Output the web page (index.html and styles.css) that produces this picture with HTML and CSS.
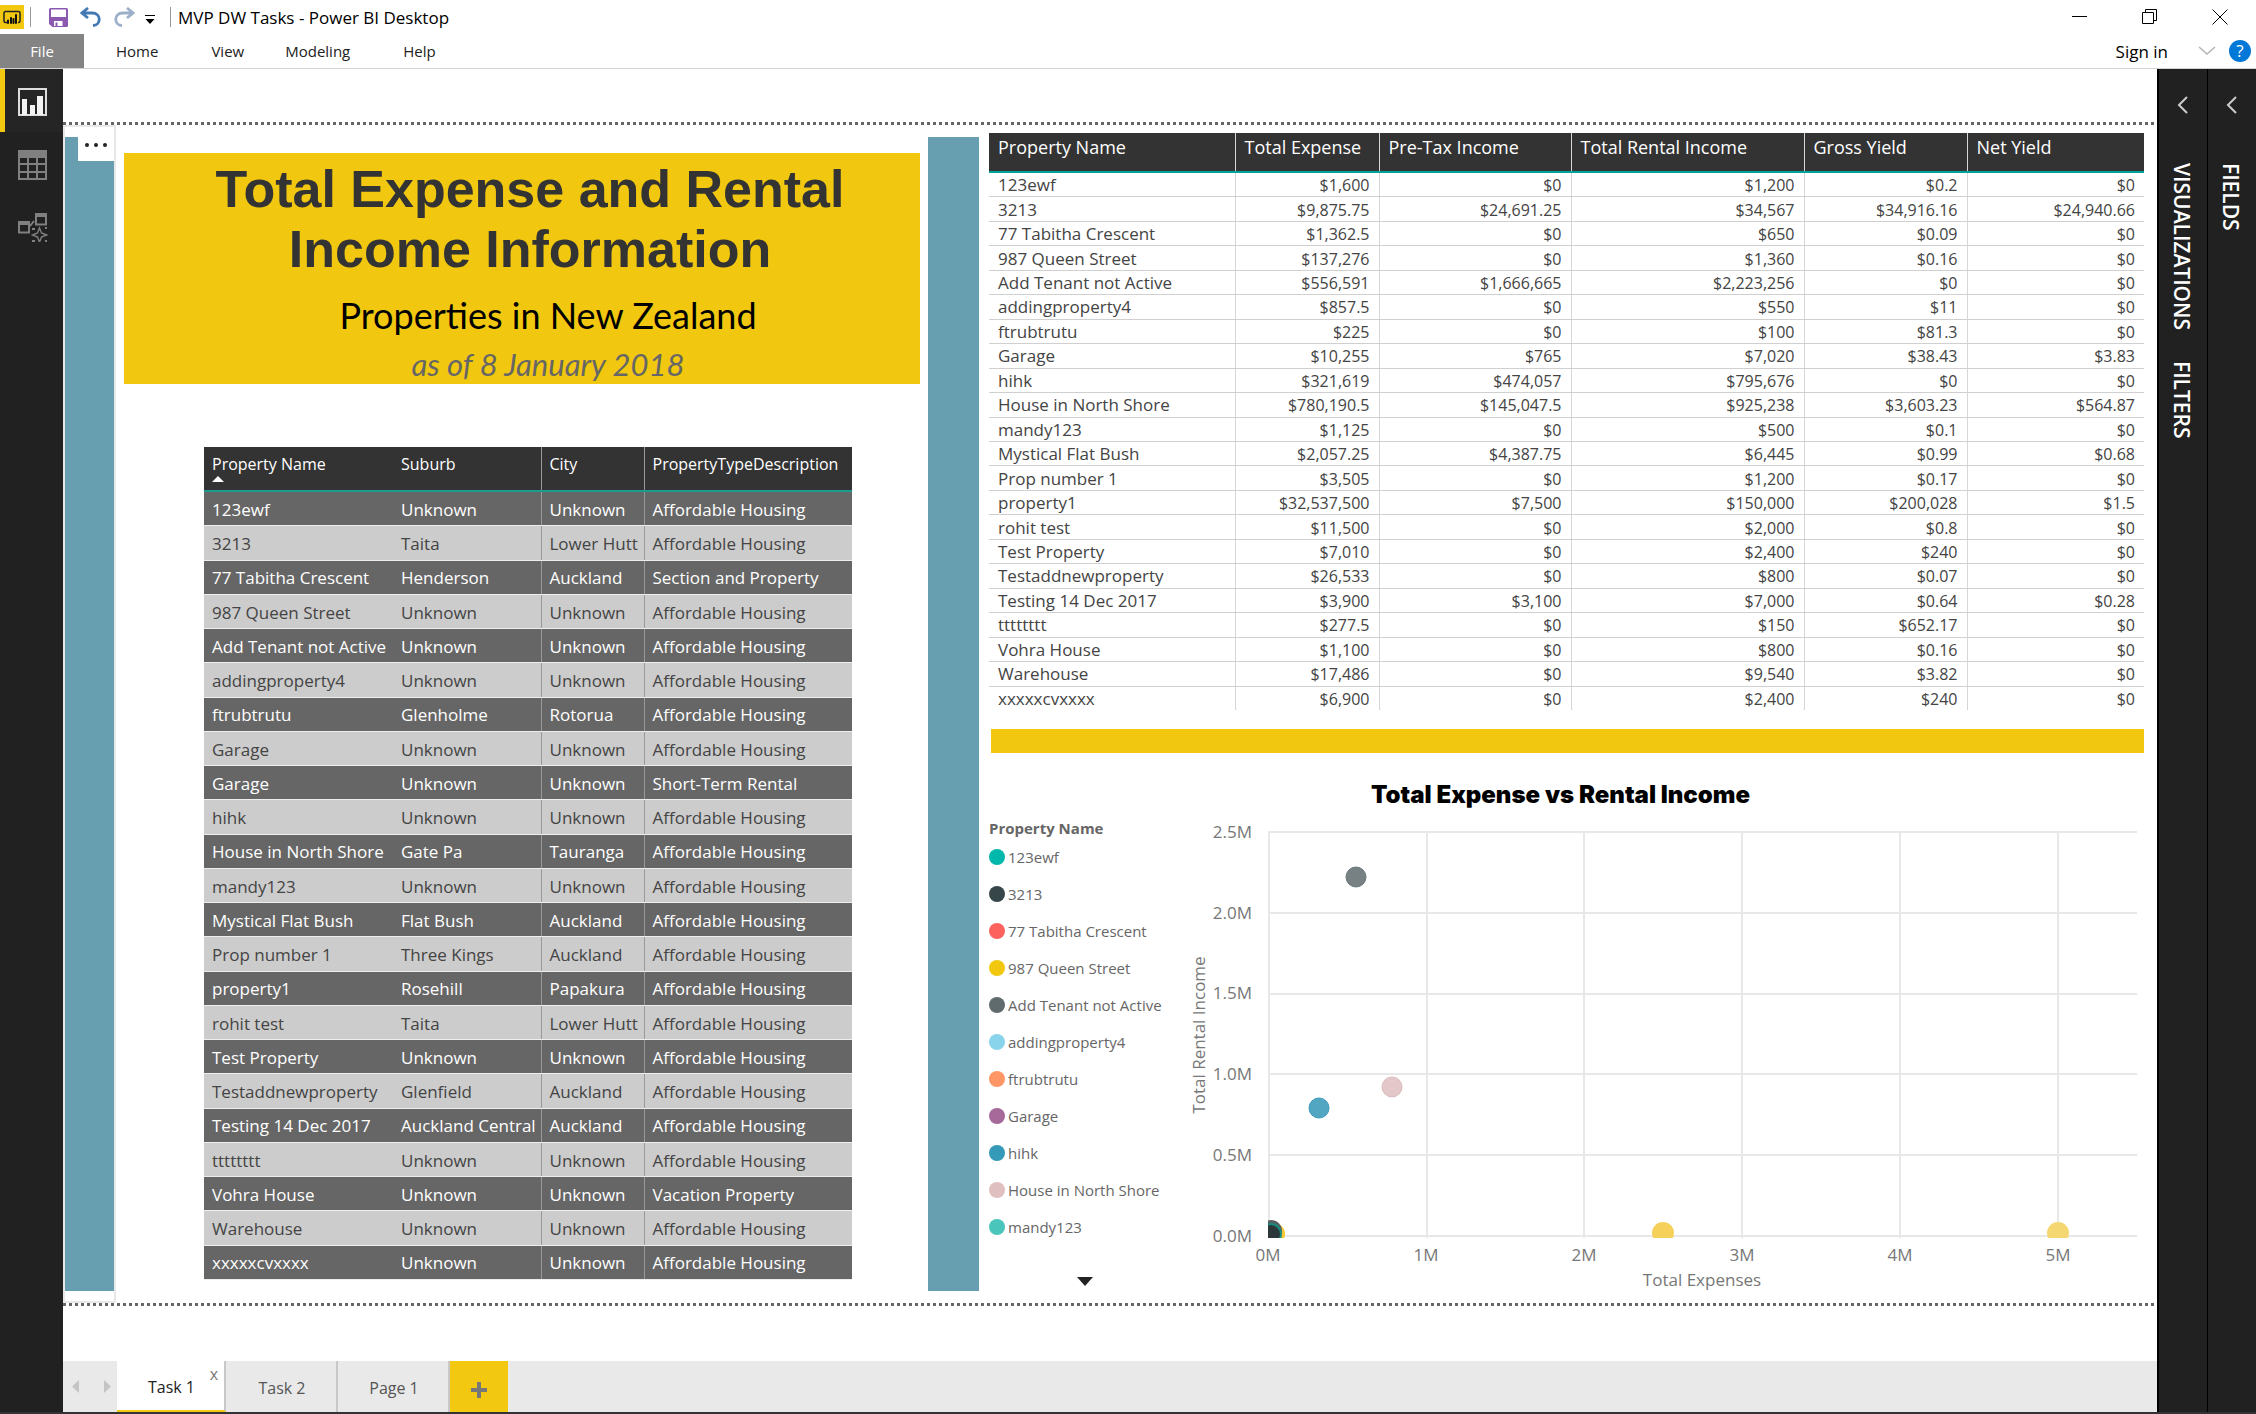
FILE: index.html
```html
<!DOCTYPE html>
<html lang="en">
<head>
<meta charset="utf-8">
<title>MVP DW Tasks - Power BI Desktop</title>
<link rel="stylesheet" href="styles.css">
</head>
<body>
<header class="titlebar">
  <div class="logo"><svg width="24" height="24" viewBox="0 0 24 24"><path d="M7 17.500H5.500a1.500 1.500 0 0 1-1.500-1.500V8a1.500 1.500 0 0 1 1.500-1.500h13A1.500 1.500 0 0 1 20 8v8a1.500 1.500 0 0 1-1.500 1.500H18" fill="none" stroke="#222" stroke-width="1.500"/><path d="M8 18v-2.500M11 18v-5M13.500 18v-4M16 18V10" stroke="#111" stroke-width="2" stroke-linecap="round"/></svg></div>
  <span class="sep"></span>
  <button class="tool save" aria-label="Save"><svg width="19" height="19" viewBox="0 0 19 19"><path d="M0 1.500Q0 0 1.500 0h16Q19 0 19 1.500v16q0 1.500-1.500 1.500h-14L0 16z" fill="#8b59b0"/><path d="M2 1.500h15V9H2z" fill="#fff"/><path d="M5 13h8.500v5H5z" fill="#fff"/><path d="M6.500 14.500h2V18h-2z" fill="#8b59b0"/></svg></button>
  <button class="tool undo" aria-label="Undo"><svg width="22" height="20" viewBox="0 0 22 20"><path d="M8 1L2 6l6 5M3 6h9c10 0 9 12.500 1 12.500" fill="none" stroke="#447ab4" stroke-width="2.800"/></svg></button>
  <button class="tool redo" aria-label="Redo"><svg width="22" height="20" viewBox="0 0 22 20"><path d="M14 1l6 5-6 5M19 6h-9C0 6 1 18.500 9 18.500" fill="none" stroke="#9db0ca" stroke-width="2.800"/></svg></button>
  <button class="tool customize" aria-label="Customize"><svg width="10" height="10" viewBox="0 0 10 10"><path d="M0 .500h10" stroke="#000"/><path d="M.500 4h9L5 9z"/></svg></button>
  <span class="sep last"></span>
  <h1 class="app-title">MVP DW Tasks - Power BI Desktop</h1>
  <div class="window-controls">
    <button aria-label="Minimize"><svg width="16" height="16" viewBox="0 0 16 16"><path d="M0 7.500h15" stroke="#000"/></svg></button>
    <button aria-label="Restore"><svg width="16" height="16" viewBox="0 0 16 16"><path d="M.5 3.500h11v11H.5zM3.500 3V.5h11v11H12" fill="none" stroke="#000"/></svg></button>
    <button aria-label="Close"><svg width="16" height="16" viewBox="0 0 16 16"><path d="M.5.5l15 15M15.500.5l-15 15" stroke="#000"/></svg></button>
  </div>
</header>
<nav class="ribbon">
  <button class="file">File</button>
  <button class="item home">Home</button>
  <button class="item view">View</button>
  <button class="item modeling">Modeling</button>
  <button class="item">Help</button>
  <div class="account">
    <button class="signin">Sign in</button>
    <button aria-label="Expand ribbon"><svg width="18" height="10" viewBox="0 0 18 10"><path d="M1 1l8 7 8-7" fill="none" stroke="#b4b4b4" stroke-width="1.500"/></svg></button>
    <button class="help" aria-label="Help center">?</button>
  </div>
</nav>
<main class="main">
  <nav class="rail">
    <button class="active" aria-label="Report"><svg width="29" height="28" viewBox="0 0 29 28"><path d="M1 1h27v26H1z" fill="none" stroke="#ddd" stroke-width="2"/><path d="M4 11h5v16H4zM12 17h5v10h-5zM19 8h6v19h-6z" fill="#f2f2f2"/></svg></button>
    <button aria-label="Data"><svg width="29" height="30" viewBox="0 0 29 30"><path d="M0 0h29v30H0z" fill="#808080"/><path d="M2 8h7v5H2zM11 8h7v5h-7zM20 8h7v5h-7zM2 15h7v6H2zM11 15h7v6h-7zM20 15h7v6h-7zM2 23h7v5H2zM11 23h7v5h-7zM20 23h7v5h-7z" fill="#212121"/></svg></button>
    <button aria-label="Relationships"><svg width="30" height="29" viewBox="0 0 30 29"><path d="M1 9h10v10.500H1zM18 1h10v10.500H18zM12 13l4-5" fill="none" stroke="#808080" stroke-width="2"/><path d="M0 8h12v4H0zM17 0h12v4H17z" fill="#808080"/><path d="M21.500 15l2 5 5 2-5 2-2 5-2-5-5-2 5-2z" fill="none" stroke="#808080" stroke-width="1.400"/><path d="M14 15h3v2h-3zM27 14h2v2h-2zM14 27h3v2h-3zM27 27h2v2h-2z" fill="#808080"/></svg></button>
  </nav>
  <div class="workspace">
    <div class="report">
      <div class="selected-shape"><div class="bar"></div><button class="more" aria-label="More options"><svg width="22" height="4" viewBox="0 0 22 4"><g fill="#222"><circle cx="2" cy="2" r="2"/><circle cx="11" cy="2" r="2"/><circle cx="20" cy="2" r="2"/></g></svg></button></div>
      <section class="left">
        <div class="banner">
          <h2>Total Expense and Rental Income Information</h2>
          <p class="subtitle">Properties in New Zealand</p>
          <p class="date">as of 8 January 2018</p>
        </div>
        <table class="places">
          <colgroup><col class="p1"><col class="p2"><col class="p3"><col class="p4"></colgroup>
          <thead><tr><th>Property Name<svg class="sort" width="12" height="6" viewBox="0 0 12 6"><path d="M0 6l6-6 6 6z" fill="#fff"/></svg></th><th>Suburb</th><th>City</th><th>PropertyTypeDescription</th></tr></thead>
          <tbody>
            <tr><td>123ewf</td><td>Unknown</td><td>Unknown</td><td>Affordable Housing</td></tr>
            <tr><td>3213</td><td>Taita</td><td>Lower Hutt</td><td>Affordable Housing</td></tr>
            <tr><td>77 Tabitha Crescent</td><td>Henderson</td><td>Auckland</td><td>Section and Property</td></tr>
            <tr><td>987 Queen Street</td><td>Unknown</td><td>Unknown</td><td>Affordable Housing</td></tr>
            <tr><td>Add Tenant not Active</td><td>Unknown</td><td>Unknown</td><td>Affordable Housing</td></tr>
            <tr><td>addingproperty4</td><td>Unknown</td><td>Unknown</td><td>Affordable Housing</td></tr>
            <tr><td>ftrubtrutu</td><td>Glenholme</td><td>Rotorua</td><td>Affordable Housing</td></tr>
            <tr><td>Garage</td><td>Unknown</td><td>Unknown</td><td>Affordable Housing</td></tr>
            <tr><td>Garage</td><td>Unknown</td><td>Unknown</td><td>Short-Term Rental</td></tr>
            <tr><td>hihk</td><td>Unknown</td><td>Unknown</td><td>Affordable Housing</td></tr>
            <tr><td>House in North Shore</td><td>Gate Pa</td><td>Tauranga</td><td>Affordable Housing</td></tr>
            <tr><td>mandy123</td><td>Unknown</td><td>Unknown</td><td>Affordable Housing</td></tr>
            <tr><td>Mystical Flat Bush</td><td>Flat Bush</td><td>Auckland</td><td>Affordable Housing</td></tr>
            <tr><td>Prop number 1</td><td>Three Kings</td><td>Auckland</td><td>Affordable Housing</td></tr>
            <tr><td>property1</td><td>Rosehill</td><td>Papakura</td><td>Affordable Housing</td></tr>
            <tr><td>rohit test</td><td>Taita</td><td>Lower Hutt</td><td>Affordable Housing</td></tr>
            <tr><td>Test Property</td><td>Unknown</td><td>Unknown</td><td>Affordable Housing</td></tr>
            <tr><td>Testaddnewproperty</td><td>Glenfield</td><td>Auckland</td><td>Affordable Housing</td></tr>
            <tr><td>Testing 14 Dec 2017</td><td>Auckland Central</td><td>Auckland</td><td>Affordable Housing</td></tr>
            <tr><td>tttttttt</td><td>Unknown</td><td>Unknown</td><td>Affordable Housing</td></tr>
            <tr><td>Vohra House</td><td>Unknown</td><td>Unknown</td><td>Vacation Property</td></tr>
            <tr><td>Warehouse</td><td>Unknown</td><td>Unknown</td><td>Affordable Housing</td></tr>
            <tr><td>xxxxxcvxxxx</td><td>Unknown</td><td>Unknown</td><td>Affordable Housing</td></tr>
          </tbody>
        </table>
      </section>
      <div class="divider"></div>
      <section class="right">
        <table class="money">
          <colgroup><col class="m1"><col class="m2"><col class="m3"><col class="m4"><col class="m5"><col class="m6"></colgroup>
          <thead><tr><th>Property Name</th><th>Total Expense</th><th>Pre-Tax Income</th><th>Total Rental Income</th><th>Gross Yield</th><th>Net Yield</th></tr></thead>
          <tbody>
            <tr><td>123ewf</td><td>$1,600</td><td>$0</td><td>$1,200</td><td>$0.2</td><td>$0</td></tr>
            <tr><td>3213</td><td>$9,875.75</td><td>$24,691.25</td><td>$34,567</td><td>$34,916.16</td><td>$24,940.66</td></tr>
            <tr><td>77 Tabitha Crescent</td><td>$1,362.5</td><td>$0</td><td>$650</td><td>$0.09</td><td>$0</td></tr>
            <tr><td>987 Queen Street</td><td>$137,276</td><td>$0</td><td>$1,360</td><td>$0.16</td><td>$0</td></tr>
            <tr><td>Add Tenant not Active</td><td>$556,591</td><td>$1,666,665</td><td>$2,223,256</td><td>$0</td><td>$0</td></tr>
            <tr><td>addingproperty4</td><td>$857.5</td><td>$0</td><td>$550</td><td>$11</td><td>$0</td></tr>
            <tr><td>ftrubtrutu</td><td>$225</td><td>$0</td><td>$100</td><td>$81.3</td><td>$0</td></tr>
            <tr><td>Garage</td><td>$10,255</td><td>$765</td><td>$7,020</td><td>$38.43</td><td>$3.83</td></tr>
            <tr><td>hihk</td><td>$321,619</td><td>$474,057</td><td>$795,676</td><td>$0</td><td>$0</td></tr>
            <tr><td>House in North Shore</td><td>$780,190.5</td><td>$145,047.5</td><td>$925,238</td><td>$3,603.23</td><td>$564.87</td></tr>
            <tr><td>mandy123</td><td>$1,125</td><td>$0</td><td>$500</td><td>$0.1</td><td>$0</td></tr>
            <tr><td>Mystical Flat Bush</td><td>$2,057.25</td><td>$4,387.75</td><td>$6,445</td><td>$0.99</td><td>$0.68</td></tr>
            <tr><td>Prop number 1</td><td>$3,505</td><td>$0</td><td>$1,200</td><td>$0.17</td><td>$0</td></tr>
            <tr><td>property1</td><td>$32,537,500</td><td>$7,500</td><td>$150,000</td><td>$200,028</td><td>$1.5</td></tr>
            <tr><td>rohit test</td><td>$11,500</td><td>$0</td><td>$2,000</td><td>$0.8</td><td>$0</td></tr>
            <tr><td>Test Property</td><td>$7,010</td><td>$0</td><td>$2,400</td><td>$240</td><td>$0</td></tr>
            <tr><td>Testaddnewproperty</td><td>$26,533</td><td>$0</td><td>$800</td><td>$0.07</td><td>$0</td></tr>
            <tr><td>Testing 14 Dec 2017</td><td>$3,900</td><td>$3,100</td><td>$7,000</td><td>$0.64</td><td>$0.28</td></tr>
            <tr><td>tttttttt</td><td>$277.5</td><td>$0</td><td>$150</td><td>$652.17</td><td>$0</td></tr>
            <tr><td>Vohra House</td><td>$1,100</td><td>$0</td><td>$800</td><td>$0.16</td><td>$0</td></tr>
            <tr><td>Warehouse</td><td>$17,486</td><td>$0</td><td>$9,540</td><td>$3.82</td><td>$0</td></tr>
            <tr><td>xxxxxcvxxxx</td><td>$6,900</td><td>$0</td><td>$2,400</td><td>$240</td><td>$0</td></tr>
          </tbody>
        </table>
        <div class="rule"></div>
        <h3 class="chart-title">Total Expense vs Rental Income</h3>
        <div class="chart">
          <div class="legend">
            <h4>Property Name</h4>
            <ul>
              <li><i class="dot c1"></i>123ewf</li>
              <li><i class="dot c2"></i>3213</li>
              <li><i class="dot c3"></i>77 Tabitha Crescent</li>
              <li><i class="dot c4"></i>987 Queen Street</li>
              <li><i class="dot c5"></i>Add Tenant not Active</li>
              <li><i class="dot c6"></i>addingproperty4</li>
              <li><i class="dot c7"></i>ftrubtrutu</li>
              <li><i class="dot c8"></i>Garage</li>
              <li><i class="dot c9"></i>hihk</li>
              <li><i class="dot c10"></i>House in North Shore</li>
              <li><i class="dot c11"></i>mandy123</li>
            </ul>
            <button aria-label="More legend items"><svg width="16" height="9" viewBox="0 0 16 9"><path d="M0 0h16L8 9z" fill="#222"/></svg></button>
          </div>
          <svg class="plot" viewBox="0 0 959 485">
            <defs><clipPath id="area"><path d="M83 0h876v423H83z"/></clipPath></defs>
            <path d="M84 17h868M84 98h868M84 179h868M84 259h868M84 340h868M84 421h868M84 16v407M242 16v407M399 16v407M557 16v407M715 16v407M873 16v407" fill="none" stroke="#e8e8e8" stroke-width="2"/>
            <g clip-path="url(#area)">
              <circle cx="171" cy="62" r="10" fill="#778082" stroke="#69787a"/>
              <circle cx="134" cy="293" r="10" fill="#53a6c2" stroke="#3a9abb"/>
              <circle cx="207" cy="272" r="10" fill="#e4c8c9" stroke="#dcbcbd"/>
              <circle cx="478" cy="418" r="11" fill="#f5d15c"/>
              <circle cx="873" cy="418" r="11" fill="#f5d772"/>
              <circle cx="89" cy="419" r="11" fill="#f8c934"/>
              <circle cx="86" cy="416" r="11" fill="#555e60"/>
              <circle cx="86" cy="419" r="10" fill="#2c3739" stroke="#1a8c80" stroke-width="2"/>
            </g>
            <g class="ylabels">
              <text x="67" y="23">2.5M</text><text x="67" y="104">2.0M</text><text x="67" y="184">1.5M</text><text x="67" y="265">1.0M</text><text x="67" y="346">0.5M</text><text x="67" y="427">0.0M</text>
            </g>
            <g class="xlabels">
              <text x="83" y="446">0M</text><text x="241" y="446">1M</text><text x="399" y="446">2M</text><text x="557" y="446">3M</text><text x="715" y="446">4M</text><text x="873" y="446">5M</text>
              <text x="517" y="471">Total Expenses</text>
              <text transform="translate(20 220) rotate(-90)">Total Rental Income</text>
            </g>
          </svg>
        </div>
      </section>
    </div>
    <nav class="tabs">
      <div class="arrows"><button aria-label="Previous page"><svg width="7" height="13" viewBox="0 0 7 13"><path d="M7 0v13L0 6.500z" fill="#c4c4c4"/></svg></button><button aria-label="Next page"><svg width="7" height="13" viewBox="0 0 7 13"><path d="M0 0v13l7-6.500z" fill="#c4c4c4"/></svg></button></div>
      <div class="tab current"><button>Task 1</button><button class="close" aria-label="Delete page">x</button></div>
      <div class="tab"><button>Task 2</button></div>
      <div class="tab"><button>Page 1</button></div>
      <button class="add" aria-label="New page"><svg width="16" height="16" viewBox="0 0 16 16"><path d="M8 0v16M0 8h16" stroke="#777" stroke-width="4"/></svg></button>
    </nav>
  </div>
  <aside class="pane">
    <button aria-label="Expand visualizations"><svg width="11" height="18" viewBox="0 0 11 18"><path d="M10 1L2 9l8 8" fill="none" stroke="#ccc" stroke-width="2"/></svg></button>
    <h2>VISUALIZATIONS</h2><h2>FILTERS</h2>
  </aside>
  <aside class="pane">
    <button aria-label="Expand fields"><svg width="11" height="18" viewBox="0 0 11 18"><path d="M10 1L2 9l8 8" fill="none" stroke="#ccc" stroke-width="2"/></svg></button>
    <h2>FIELDS</h2>
  </aside>
</main>
</body>
</html>
```
FILE: styles.css
```css
* { box-sizing: border-box; }
body {
  margin: 0;
  min-height: 100vh;
  display: flex;
  flex-direction: column;
  background: #fff;
  border-bottom: 2px solid #333;
  font-family: "Open Sans", "Noto Sans", sans-serif;
  font-size: 16px;
  color: #222;
}
h1, h2, h3, h4, p, ul { margin: 0; padding: 0; font-weight: 400; }
ul { list-style: none; }
button { border: 0; padding: 0; background: none; font: inherit; color: inherit; }
svg { display: block; }

/* Title bar */
.titlebar { display: flex; align-items: center; height: 34px; }
.logo { width: 24px; height: 24px; background: #f2c811; }
.titlebar > * { flex: none; }
.sep { width: 1px; height: 20px; margin: 0 18px 0 6px; background: #999; }
.sep.last { margin: 0 7px 0 15px; }
.save { margin-right: 12px; }
.undo { margin-right: 11px; }
.redo { margin-right: 10px; }
.customize { padding-top: 6px; }
.app-title { padding-top: 2px; font-size: 17px; line-height: 24px; color: #000; }
.window-controls { display: flex; gap: 54px; margin-left: auto; padding-right: 28px; }

/* Ribbon */
.ribbon { display: flex; height: 35px; border-bottom: 1px solid #d2d2d2; font-size: 15px; }
.file { width: 84px; background: #848484; color: #fff; }
.home { margin-left: 32px; }
.item { margin-right: 53px; }
.modeling { margin-left: -12px; }
.account { display: flex; align-items: center; margin-left: auto; padding-right: 5px; color: #000; font-size: 17px; }
.account svg { margin: 0 13px 0 30px; }
.help { width: 22px; height: 22px; border-radius: 50%; background: #0078d7; color: #fff; line-height: 22px; }

.main { display: flex; flex: 1; }

/* View switcher */
.rail { display: flex; flex-direction: column; width: 63px; background: #212121; }
.rail button { height: 63px; padding: 2px 0 0 18px; }
.rail .active { border-left: 5px solid #f2c811; padding-left: 13px; background: #252525; }

/* Report canvas */
.workspace { display: flex; flex: 1; flex-direction: column; }
.report {
  display: grid;
  flex: 1;
  grid-template-columns: 53px 812fr 51px 1165fr;
  padding: 3px 13px 3px 0;
  margin: 53px 0 55px;
  background:
    repeating-linear-gradient(90deg, #666 0 3px, #fff 3px 6px) top / 100% 3px no-repeat,
    repeating-linear-gradient(90deg, #666 0 3px, #fff 3px 6px) bottom / 100% 3px no-repeat;
}
.selected-shape { position: relative; display: flex; border: 2px solid #e8e8e8; padding: 10px 0; }
.bar { flex: 1; background: #679eb0; }
.more { position: absolute; top: 0; right: 0; width: 36px; height: 34px; padding: 2px 0 0 7px; background: #fff; }
.divider { margin: 12px 0; background: #679eb0; }
.left { padding: 28px 8px 0 8px; }
.banner { padding: 6px 0 0; height: 231px; background: #f1c80f; text-align: center; }
.banner h2 { padding: 0 60px 0 76px; font: 700 52px/60px "Liberation Sans", Arial, sans-serif; color: #333; }
.banner p { padding-left: 52px; font-family: Lato, Carlito, sans-serif; }
.subtitle { padding-top: 10px; font-size: 36px; line-height: 52px; color: #000; }
.date { padding-top: 4px; font-size: 31px; line-height: 38px; font-style: italic; color: #666; }

table { border-collapse: collapse; table-layout: fixed; }
th, td { padding: 0 8px; text-align: left; font-weight: 400; white-space: nowrap; }
.places { width: calc(100% - 148px); height: 833px; margin: 63px 68px 0 80px; font-size: 17px; line-height: 24px; }
.p1 { width: 189px; }
.p2 { width: 148px; }
.p3 { width: 103px; }
.places th { height: 44px; padding-top: 5px; vertical-align: top; background: #333; color: #fff; border-bottom: 2px solid #1c9c8f; font-size: 16px; }
.places td { padding-top: 2px; background: #666; color: #fff; font-weight: 500; border-bottom: 1px solid #eee; }
.places tr:nth-child(even) td { background: #ccc; color: #444; font-weight: 400; }
.places th:nth-child(n+2):not(:last-child), .places td:nth-child(n+2):not(:last-child) { border-right: 1px solid #999; }
.places thead tr th:nth-child(n) { border-bottom: 2px solid #1c9c8f; }

.right { padding: 8px 0 0 10px; }
.money { width: 100%; height: 577px; font-size: 17px; line-height: 22px; color: #444; }
.m1 { width: 246px; }
.m2 { width: 144px; }
.m3 { width: 192px; }
.m4 { width: 233px; }
.m5 { width: 163px; }
.money th, .money td { padding: 1px 9px 0; }
.money th { height: 39px; padding-top: 2px; vertical-align: top; background: #333; color: #fff; font-size: 18px; line-height: 24px; }
.money td { border-bottom: 1px solid #d0d0d0; }
.money tr:last-child td { border-bottom: 0; }
.money td + td { text-align: right; font-size: 16px; }
.money th:not(:last-child), .money td:not(:last-child) { border-right: 1px solid #d6d6d6; }
.money thead tr th { border-bottom: 2px solid #00a399; }
.rule { height: 24px; margin: 19px 0 28px 2px; background: #f1c80f; }

/* Scatter chart */
.chart-title { padding-right: 12px; font: 900 24px/28px Inter, "Liberation Sans", sans-serif; text-align: center; color: #000; }
.chart { display: grid; grid-template-columns: 196px 1fr; padding-top: 6px; }
.legend { padding-top: 3px; font-size: 15px; color: #666; white-space: nowrap; }
.legend h4 { font-size: 15px; font-weight: 700; line-height: 20px; }
.legend li { display: flex; align-items: center; gap: 3px; height: 37px; }
.legend button { margin: 32px 0 0 88px; }
.dot { width: 16px; height: 16px; border-radius: 50%; }
.c1 { background: #01b8aa; }
.c2 { background: #374649; }
.c3 { background: #fd625e; }
.c4 { background: #f2c80f; }
.c5 { background: #5f6b6d; }
.c6 { background: #8ad4eb; }
.c7 { background: #fe9666; }
.c8 { background: #a66999; }
.c9 { background: #3599b8; }
.c10 { background: #dfbfbf; }
.c11 { background: #4ac5bb; }
.plot { width: 100%; font-size: 17px; fill: #777; }
.ylabels { text-anchor: end; }
.xlabels { text-anchor: middle; }

/* Page tabs */
.tabs { display: flex; height: 51px; background: #e9e9e9; color: #555; font-weight: 500; }
.arrows { display: flex; justify-content: space-between; align-items: center; width: 54px; padding: 0 6px 0 9px; }
.tab { position: relative; display: flex; width: 112px; border-right: 2px solid #c8c8c8; }
.tab > button { flex: 1; padding: 2px 0 0 2px; }
.tab.current { width: 109px; background: #fff; color: #222; border-bottom: 2px solid #f2c811; }
.tab .close { position: absolute; top: 3px; right: 6px; padding: 0; line-height: 20px; color: #777; }
.add { display: grid; place-items: center; width: 58px; padding-top: 6px; background: #f2c811; }

/* Collapsed panes */
.pane { display: flex; flex-direction: column; align-items: center; gap: 31px; width: 49px; padding: 27px 2px 0 0; background: #212121; border-left: 1px solid #000; color: #fff; }
.workspace + .pane { width: 50px; border-left-width: 2px; }
.pane h2 { writing-mode: vertical-rl; font-size: 21px; font-weight: 600; line-height: 30px; }
.pane button { margin-bottom: 18px; }
```
